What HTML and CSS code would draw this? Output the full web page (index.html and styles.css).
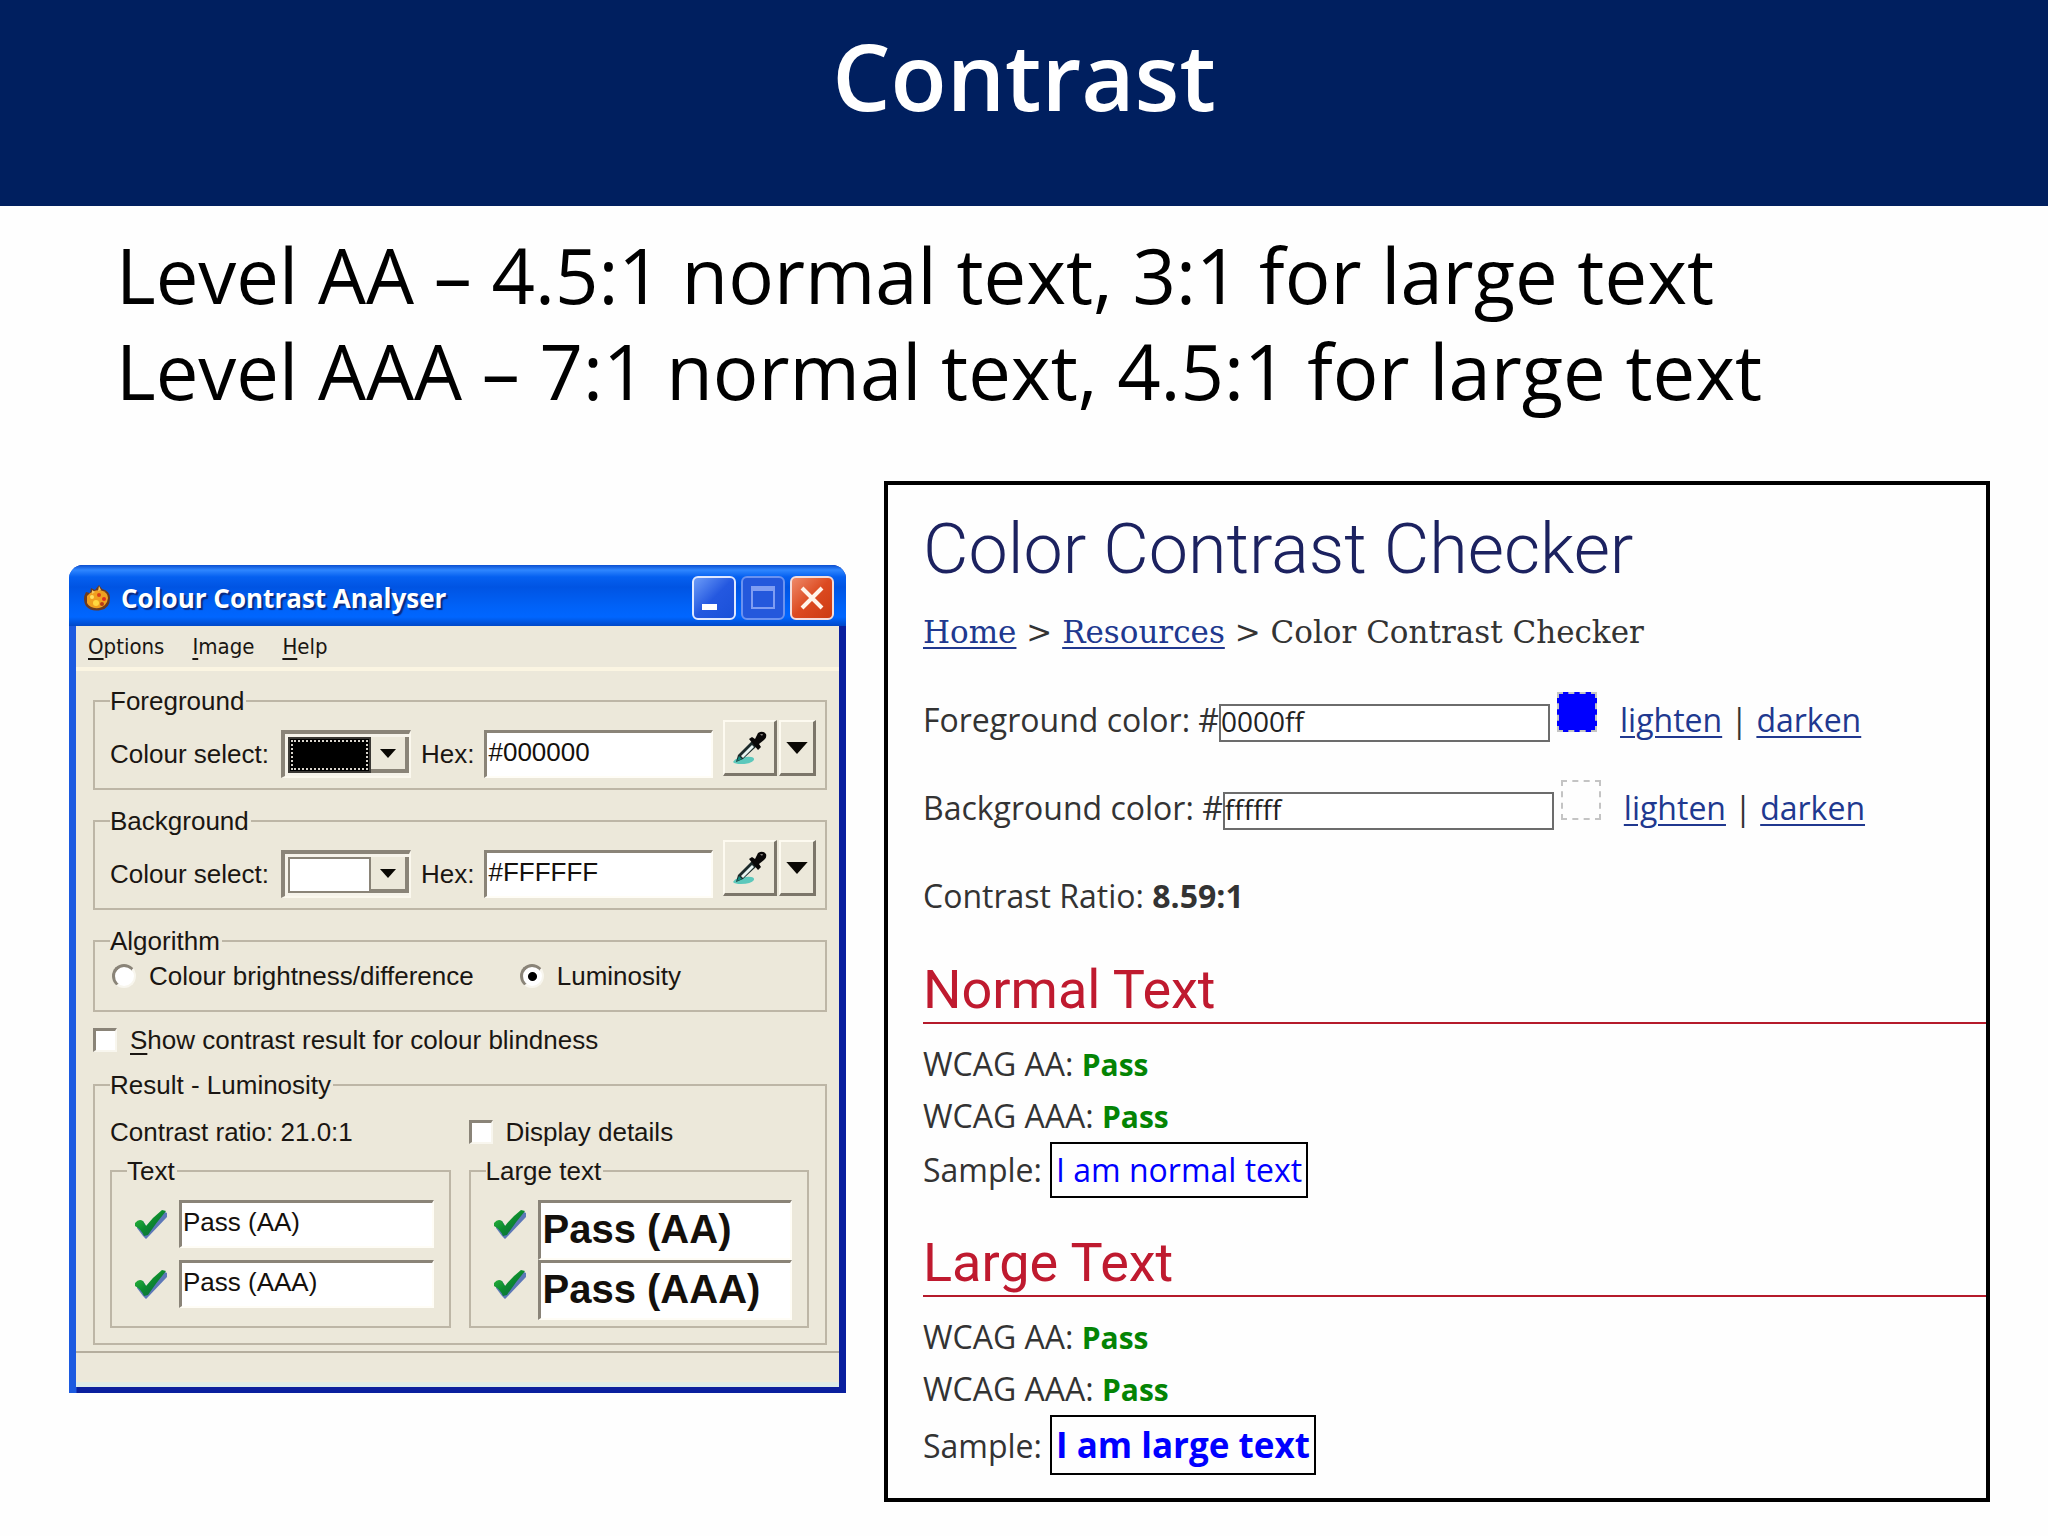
FILE: index.html
```html
<!DOCTYPE html>
<html lang="en">
<head>
<meta charset="utf-8">
<title>Contrast</title>
<link rel="stylesheet" href="styles.css">
</head>
<body>
<svg class="symbols" aria-hidden="true">
  <defs>
    <linearGradient id="tick-fill" x1="0" y1="0" x2="1" y2="1">
      <stop offset="0" stop-color="#35c444"/>
      <stop offset="0.5" stop-color="#0c8a2e"/>
      <stop offset="1" stop-color="#0b5a4a"/>
    </linearGradient>
  </defs>
  <symbol id="tick" viewBox="0 0 34 30">
    <path d="M3 15 L9 12 L13 18 L29 2 L33 4 L33 8 L15 27 L12 30 L9 27 L3 19 Z" fill="#5d78b8"/>
    <path d="M1 14 Q5 9 9 12 L12 17 Q19 8 28 1 L32 2 Q22 14 14 26 L10 27 Q7 20 1 17 Z" fill="url(#tick-fill)"/>
  </symbol>
  <symbol id="dropper" viewBox="0 0 34 34">
    <path d="M0 31 Q3 26 12 26 Q22 25 21 29 Q18 33 8 33 Q2 33 0 31 Z" fill="#5cc8bc"/>
    <path d="M3 31 L5 24 L19 10 L24 15 L10 28 Z" fill="#1c2a2a"/>
    <path d="M8 25 L19 14 L21 16 L10 27 Z" fill="#e8f4f2"/>
    <path d="M4 30 L6 25 L9 28 Z" fill="#128a80"/>
    <path d="M16 8 L19 6 L22 8 L25 2 Q30 -1 33 3 Q34 7 31 9 L26 13 L28 16 L25 19 Z" fill="#0a0808"/>
    <path d="M27 3 L30 3 L29 5 Z" fill="#8a8580"/>
  </symbol>
</svg>

<header class="banner">
  <h1 class="banner-title">Contrast</h1>
</header>

<main>
  <p class="levels">Level AA – 4.5:1 normal text, 3:1 for large text<br>Level AAA – 7:1 normal text, 4.5:1 for large text</p>

  <div class="figures">
    <section class="window" aria-label="Colour Contrast Analyser">
      <div class="titlebar">
        <svg class="app-icon" viewBox="0 0 28 28" aria-hidden="true">
          <path d="M3 8 L7 9 L8 4 L12 6 L16 1 L19 5 Q27 7 27 14 Q27 24 18 26 Q8 28 3 22 Q-1 15 3 8 Z" fill="#6b3a20"/>
          <path d="M4 12 Q9 6 17 6 Q25 8 25 14 Q24 22 16 24 Q7 25 4 19 Z" fill="#f0a020"/>
          <path d="M9 6 L12 8 L9 10 Z M16 2 L18 6 L15 7 Z" fill="#f4c860"/>
          <circle cx="9" cy="13" r="2" fill="#ffe060"/>
          <circle cx="16" cy="11" r="2" fill="#d84018"/>
          <circle cx="21" cy="15" r="2" fill="#e03020"/>
          <circle cx="13" cy="19" r="3" fill="#ffd840"/>
          <circle cx="19" cy="20" r="2" fill="#b83c18"/>
        </svg>
        <h2 class="titlebar-text">Colour Contrast Analyser</h2>
        <button class="caption-button" type="button" aria-label="Minimise">
          <svg viewBox="0 0 40 40" aria-hidden="true"><path d="M8 26h15v6H8z" fill="#fff"/></svg>
        </button>
        <button class="caption-button caption-button-dim" type="button" aria-label="Maximise">
          <svg viewBox="0 0 40 40" aria-hidden="true"><path d="M9 9h22v21H9z" fill="none" stroke="#7f9df2" stroke-width="2"/><path d="M8 8h24v5H8z" fill="#7f9df2"/></svg>
        </button>
        <button class="caption-button caption-button-close" type="button" aria-label="Close">
          <svg viewBox="0 0 40 40" aria-hidden="true"><path d="M10 10L30 30M30 10L10 30" stroke="#fff4ea" stroke-width="4"/></svg>
        </button>
      </div>

      <div class="client">
        <nav class="menubar">
          <button type="button"><u>O</u>ptions</button>
          <button type="button"><u>I</u>mage</button>
          <button type="button"><u>H</u>elp</button>
        </nav>

        <form class="analyser">
          <fieldset class="group">
            <legend>Foreground</legend>
            <div class="colour-row">
              <label for="fg-select">Colour select:</label>
              <span class="combo">
                <select id="fg-select" class="combo-black"><option value="#000000" aria-label="Black"></option></select>
                <span class="combo-arrow"><svg class="arrow" viewBox="0 0 16 9" aria-hidden="true"><path d="M0 0h16L8 9z"/></svg></span>
              </span>
              <label for="fg-hex">Hex:</label>
              <input id="fg-hex" class="field" type="text" value="#000000">
              <span class="tools">
                <button class="tool" type="button" aria-label="Pick foreground colour"><svg class="dropper" aria-hidden="true"><use href="#dropper"/></svg></button>
                <button class="tool tool-narrow" type="button" aria-label="Foreground picker size"><svg class="arrow arrow-large" viewBox="0 0 16 9" aria-hidden="true"><path d="M0 0h16L8 9z"/></svg></button>
              </span>
            </div>
          </fieldset>

          <fieldset class="group">
            <legend>Background</legend>
            <div class="colour-row">
              <label for="bg-select">Colour select:</label>
              <span class="combo">
                <select id="bg-select" class="combo-white"><option value="#FFFFFF" aria-label="White"></option></select>
                <span class="combo-arrow"><svg class="arrow" viewBox="0 0 16 9" aria-hidden="true"><path d="M0 0h16L8 9z"/></svg></span>
              </span>
              <label for="bg-hex">Hex:</label>
              <input id="bg-hex" class="field" type="text" value="#FFFFFF">
              <span class="tools">
                <button class="tool" type="button" aria-label="Pick background colour"><svg class="dropper" aria-hidden="true"><use href="#dropper"/></svg></button>
                <button class="tool tool-narrow" type="button" aria-label="Background picker size"><svg class="arrow arrow-large" viewBox="0 0 16 9" aria-hidden="true"><path d="M0 0h16L8 9z"/></svg></button>
              </span>
            </div>
          </fieldset>

          <fieldset class="group">
            <legend>Algorithm</legend>
            <div class="algorithm-row">
              <label class="choice"><input type="radio" name="algorithm">Colour brightness/difference</label>
              <label class="choice"><input type="radio" name="algorithm" checked>Luminosity</label>
            </div>
          </fieldset>

          <label class="choice blindness"><input type="checkbox"><span><u>S</u>how contrast result for colour blindness</span></label>

          <fieldset class="group result">
            <legend>Result - Luminosity</legend>
            <div class="result-grid">
              <span class="ratio">Contrast ratio: 21.0:1</span>
              <label class="choice"><input type="checkbox">Display details</label>
              <fieldset class="group outcome">
                <legend>Text</legend>
                <div class="outcome-row"><svg class="tick" aria-hidden="true"><use href="#tick"/></svg><input class="field" type="text" value="Pass (AA)" aria-label="Text, level AA" readonly></div>
                <div class="outcome-row"><svg class="tick" aria-hidden="true"><use href="#tick"/></svg><input class="field" type="text" value="Pass (AAA)" aria-label="Text, level AAA" readonly></div>
              </fieldset>
              <fieldset class="group outcome">
                <legend>Large text</legend>
                <div class="outcome-row"><svg class="tick" aria-hidden="true"><use href="#tick"/></svg><input class="field field-large" type="text" value="Pass (AA)" aria-label="Large text, level AA" readonly></div>
                <div class="outcome-row"><svg class="tick" aria-hidden="true"><use href="#tick"/></svg><input class="field field-large" type="text" value="Pass (AAA)" aria-label="Large text, level AAA" readonly></div>
              </fieldset>
            </div>
          </fieldset>
        </form>
        <div class="statusbar"></div>
      </div>
    </section>

    <section class="checker">
      <h2 class="checker-title">Color Contrast Checker</h2>
      <nav class="crumbs"><a href="#home">Home</a> &gt; <a href="#resources">Resources</a> &gt; Color Contrast Checker</nav>

      <div class="color-row">
        <label for="foreground">Foreground color: #</label>
        <input id="foreground" type="text" value="0000ff">
        <span class="swatch swatch-blue"></span>
        <span><a href="#fg-lighten">lighten</a> | <a href="#fg-darken">darken</a></span>
      </div>
      <div class="color-row">
        <label for="background">Background color: #</label>
        <input id="background" type="text" value="ffffff">
        <span class="swatch"></span>
        <span><a href="#bg-lighten">lighten</a> | <a href="#bg-darken">darken</a></span>
      </div>
      <p class="contrast-ratio">Contrast Ratio: <b>8.59:1</b></p>

      <h3 class="section-title">Normal Text</h3>
      <div class="checks">
        <p>WCAG AA: <b class="pass">Pass</b></p>
        <p>WCAG AAA: <b class="pass">Pass</b></p>
        <p class="sample-row">Sample: <span class="sample">I am normal text</span></p>
      </div>

      <h3 class="section-title">Large Text</h3>
      <div class="checks">
        <p>WCAG AA: <b class="pass">Pass</b></p>
        <p>WCAG AAA: <b class="pass">Pass</b></p>
        <p class="sample-row">Sample: <span class="sample sample-large">I am large text</span></p>
      </div>
    </section>
  </div>
</main>
</body>
</html>
```
FILE: styles.css
```css
* { box-sizing: border-box; }

body {
  margin: 0;
  background: #fefefe;
  color: #000;
  font-family: "Open Sans", "Noto Sans", sans-serif;
}

h1, h2, h3, p { margin: 0; }

.symbols {
  position: absolute;
  width: 0;
  height: 0;
}

/* Slide heading */
.banner {
  height: 206px;
  padding-top: 8px;
  background: #001f5f;
  color: #fff;
  text-align: center;
}

.banner-title {
  font-size: 92px;
  font-weight: 600;
  line-height: 136px;
}

.levels {
  padding: 21px 116px 0;
  font-size: 76px;
  line-height: 96px;
}

.figures {
  display: grid;
  grid-template-columns: 777fr 1106fr;
  gap: 38px;
  align-items: start;
  padding: 62px 58px 32px 69px;
}

/* Desktop application window */
.window {
  margin-top: 84px;
  border-radius: 14px 14px 0 0;
  background: linear-gradient(90deg, #1c5ae0 7px, #0a1f9e 8px);
  font-family: "Liberation Sans", Arial, sans-serif;
  font-size: 26px;
  line-height: 26px;
  color: #1a1612;
}

.titlebar {
  display: flex;
  align-items: center;
  gap: 5px;
  height: 61px;
  padding: 4px 12px 0 14px;
  border-radius: 14px 14px 0 0;
  background: linear-gradient(#0b4fd0 0, #2f86ff 5px, #0560f0 12px, #0054e3 22px, #0062f8 42px, #0066ff 52px, #0048c8 61px);
}

.app-icon {
  width: 28px;
  height: 28px;
}

.titlebar-text {
  flex: 1;
  padding-left: 5px;
  color: #fff;
  font-family: "Open Sans", "Noto Sans", sans-serif;
  font-size: 26px;
  line-height: 36px;
  text-shadow: 2px 2px 1px #0a2a80;
}

.caption-button {
  width: 44px;
  height: 44px;
  padding: 0;
  border: 2px solid #dfe8ff;
  border-radius: 6px;
  background: linear-gradient(135deg, #6c9cf8, #2458e0 50%, #1a50d8);
}

.caption-button svg {
  display: block;
  width: 40px;
  height: 40px;
}

.caption-button-dim {
  border-color: #6a92f0;
  background: #2458dc;
}

.caption-button-close {
  border-color: #f6dcd8;
  background: linear-gradient(135deg, #ee8a6a, #dc4a20 50%, #cc3a12);
}

.client {
  margin: 0 7px;
  padding-bottom: 6px;
  background: linear-gradient(#ece8da, #ece8da) no-repeat 0 0 / 100% calc(100% - 6px);
}

.menubar {
  display: flex;
  gap: 28px;
  height: 45px;
  padding: 0 12px;
  border-bottom: 4px solid #fbf5e2;
}

.menubar button {
  padding: 0;
  border: 0;
  background: none;
  color: #1a1612;
  font-family: "DejaVu Sans Condensed", "DejaVu Sans", sans-serif;
  font-size: 22px;
}

.menubar u, .blindness u { text-underline-offset: 4px; }

.analyser {
  display: grid;
  gap: 18px;
  padding: 17px 12px 6px 17px;
}

.group {
  min-width: 0;
  margin: 0;
  padding: 6px 9px 10px 15px;
  border: 2px solid #bdb6a6;
}

.group legend {
  padding: 0 2px 0 0;
}

.colour-row {
  display: grid;
  grid-template-columns: 161px 130px auto 1fr auto;
  align-items: end;
  column-gap: 10px;
  height: 58px;
  line-height: 48px;
  white-space: nowrap;
}

.combo {
  display: flex;
  height: 48px;
  padding: 3px 0 3px 3px;
  border: solid;
  border-width: 4px 2px 2px 4px;
  border-color: #8a8478 #fbf8ee #fbf8ee #8a8478;
  background: #f6f3ea;
}

.combo select {
  flex: 1;
  min-width: 0;
  padding: 0;
  border: 2px solid #8a8478;
  border-radius: 0;
  outline: 2px dotted transparent;
  outline-offset: -5px;
  appearance: none;
}

.combo .combo-black {
  border-color: #3a3834;
  background: #000;
  outline-color: #d8d4cc;
}

.combo .combo-white { background: #fff; }

.combo-arrow {
  display: grid;
  place-items: center;
  width: 38px;
  border: solid #8a8478;
  border-width: 0 4px 4px 0;
  background: #ece8da;
}

.arrow {
  width: 16px;
  height: 9px;
  fill: #0a0804;
}

.arrow-large {
  width: 22px;
  height: 12px;
}

.field {
  width: 100%;
  min-width: 0;
  height: 48px;
  padding: 0 0 5px 1px;
  border: solid;
  border-width: 3px 2px 2px 3px;
  border-color: #8a8478 #fffdf6 #fffdf6 #8a8478;
  border-radius: 0;
  background: #fff;
  color: #14100c;
  font: inherit;
}

.tools {
  display: flex;
  gap: 2px;
  height: 58px;
}

.tool {
  display: grid;
  place-items: center;
  width: 54px;
  height: 56px;
  padding: 0;
  border: solid;
  border-width: 2px 3px 3px 2px;
  border-color: #fdfaf0 #7c766a #7c766a #fdfaf0;
  background: #ece8da;
}

.tool-narrow { width: 37px; }

.dropper {
  width: 34px;
  height: 34px;
}

.algorithm-row {
  display: flex;
  gap: 46px;
  padding: 0 0 8px 2px;
}

.choice {
  display: flex;
  align-items: center;
  gap: 13px;
  height: 32px;
  white-space: nowrap;
}

.choice input {
  width: 24px;
  height: 24px;
  margin: 0;
  border: solid;
  border-width: 3px 2px 2px 3px;
  border-color: #8a8478 #f8f6ee #f8f6ee #8a8478;
  background: #fff;
  appearance: none;
}

.choice input[type="radio"] { border-radius: 50%; }

.choice input[type="radio"]:checked {
  background: radial-gradient(circle, #000 4px, #fff 5px);
}

.blindness {
  height: 28px;
  margin-top: -4px;
}

.result { padding: 18px 16px 15px 15px; }

.result-grid {
  display: grid;
  grid-template-columns: 1fr 1fr;
  gap: 10px 18px;
  align-items: start;
}

.ratio { line-height: 32px; }

.outcome { padding: 16px 15px 6px 15px; }

.outcome-row {
  display: flex;
  align-items: flex-start;
  gap: 11px;
  height: 60px;
  padding-left: 7px;
}

.tick {
  flex: none;
  width: 34px;
  height: 30px;
  margin-top: 9px;
}

.field-large {
  height: 60px;
  padding: 2px 2px 4px;
  font-size: 40px;
  font-weight: 700;
  line-height: 46px;
}

.statusbar {
  height: 36px;
  border-top: 2px solid #b5ae9e;
  border-bottom: 5px solid #dcebe8;
}

/* Web page contrast checker */
.checker {
  padding: 24px 0 23px 35px;
  border: 4px solid #000;
  color: #333;
  font-size: 32px;
  line-height: 44px;
}

.checker a {
  color: #20388f;
  text-decoration-thickness: 2px;
  text-underline-offset: 4px;
}

.checker-title {
  color: #1c2260;
  font-family: Roboto, sans-serif;
  font-size: 70px;
  font-weight: 300;
  line-height: 80px;
}

.crumbs {
  margin: 23px 0 40px;
  font-family: "DejaVu Serif", serif;
  font-size: 31px;
  line-height: 40px;
  white-space: nowrap;
}

.color-row {
  display: flex;
  align-items: baseline;
  height: 50px;
  margin-bottom: 38px;
  white-space: nowrap;
}

.color-row input {
  width: 331px;
  height: 38px;
  margin: 0 7px 0 0;
  padding: 0 0 4px;
  border: 2px solid #6c6c6c;
  background: #fff;
  color: #222;
  font: inherit;
  font-size: 28px;
  line-height: 30px;
}

.swatch {
  width: 40px;
  height: 40px;
  margin-right: 23px;
  border: 2px dashed #c4c4c4;
}

.swatch-blue { background: #00f; }

.contrast-ratio { margin: 44px 0 42px; }

.section-title {
  margin-top: 35px;
  padding-bottom: 2px;
  border-bottom: 2px solid #b51a2b;
  color: #bf1a2f;
  font-family: Roboto, sans-serif;
  font-size: 54px;
  font-weight: 400;
  line-height: 60px;
}

.checks {
  margin-top: 14px;
  line-height: 52px;
}

.pass {
  color: #048404;
  font-size: 30px;
  line-height: 30px;
}

.sample-row {
  display: flex;
  align-items: baseline;
  gap: 8px;
}

.sample {
  padding: 0 4px;
  border: 2px solid #000;
  color: #00f;
}

.sample-large {
  font-size: 35px;
  font-weight: 700;
  line-height: 56px;
}
```
